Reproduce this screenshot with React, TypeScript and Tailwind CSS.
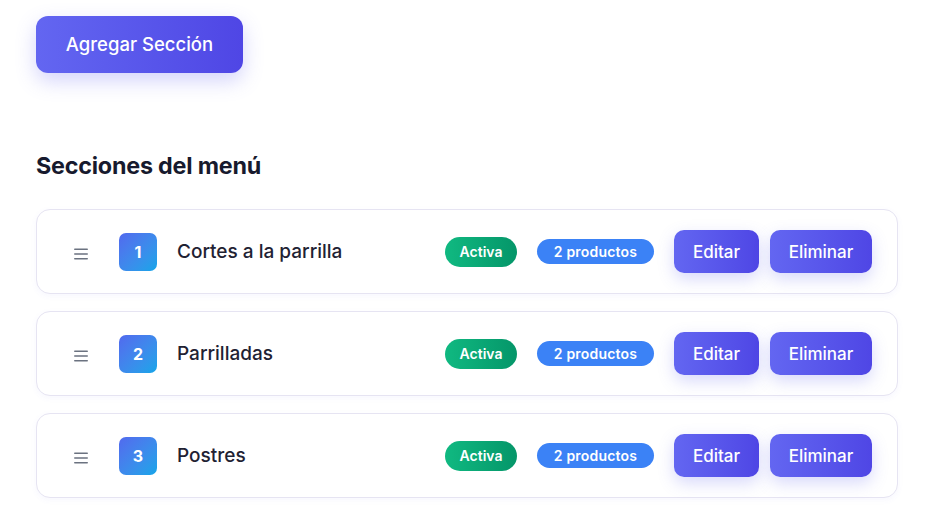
import React from "react";

const sections = [
  { n: 1, name: "Cortes a la parrilla" },
  { n: 2, name: "Parrilladas" },
  { n: 3, name: "Postres" },
];

function Hamburger() {
  return (
    <svg width="14" height="12" viewBox="0 0 14 12" className="shrink-0">
      <rect x="0" y="0.5" width="14" height="1.6" rx="0.8" fill="#6b7280" />
      <rect x="0" y="5.2" width="14" height="1.6" rx="0.8" fill="#6b7280" />
      <rect x="0" y="9.9" width="14" height="1.6" rx="0.8" fill="#6b7280" />
    </svg>
  );
}

export default function App() {
  return (
    <div
      className="min-h-screen w-full bg-white px-[36px] pt-[16px]"
      style={{ fontFamily: "Inter, 'Noto Sans', sans-serif" }}
    >
      <button className="h-[57px] w-[207px] rounded-[12px] bg-gradient-to-r from-[#6366f1] to-[#4f46e5] text-[18.5px] font-medium text-white shadow-[0_8px_20px_rgba(99,102,241,0.28)]">
        Agregar Sección
      </button>

      <h2 className="mt-[78px] text-[23.3px] font-bold leading-[30px] tracking-[-0.2px] text-[#171a2e]">
        Secciones del menú
      </h2>

      <div className="mt-[28px] flex w-[862px] flex-col gap-[17px]">
        {sections.map((s) => (
          <div
            key={s.n}
            className="flex h-[85px] items-center rounded-[14px] border border-[#e6e4f2] bg-white pl-[37px] pr-[25px] shadow-[0_2px_6px_rgba(99,102,241,0.05)]"
          >
            <div className="mt-[4px]">
              <Hamburger />
            </div>
            <div className="ml-[31px] flex h-[38px] w-[38px] items-center justify-center rounded-[7px] bg-gradient-to-br from-[#5169ee] to-[#0ea5e9] text-[16px] font-bold text-white">
              {s.n}
            </div>
            <div className="ml-[20px] mt-[2px] flex-1 text-[19px] font-medium text-[#1f2233]">
              {s.name}
            </div>
            <span className="flex h-[30px] w-[72px] items-center justify-center rounded-full bg-gradient-to-r from-[#10b981] to-[#059669] text-[14px] font-semibold text-white">
              Activa
            </span>
            <span className="ml-[20px] flex h-[25px] w-[117px] items-center justify-center rounded-full bg-[#3b82f6] text-[14px] font-semibold tracking-[0.2px] text-white">
              2 productos
            </span>
            <button className="ml-[20px] h-[43px] w-[85px] rounded-[10px] bg-gradient-to-r from-[#6366f1] to-[#4f46e5] pt-[2px] text-[17px] font-medium text-white shadow-[0_6px_16px_rgba(99,102,241,0.25)]">
              Editar
            </button>
            <button className="ml-[11px] h-[43px] w-[102px] rounded-[10px] bg-gradient-to-r from-[#6366f1] to-[#4f46e5] pt-[2px] text-[17px] font-medium text-white shadow-[0_6px_16px_rgba(99,102,241,0.25)]">
              Eliminar
            </button>
          </div>
        ))}
      </div>
    </div>
  );
}
